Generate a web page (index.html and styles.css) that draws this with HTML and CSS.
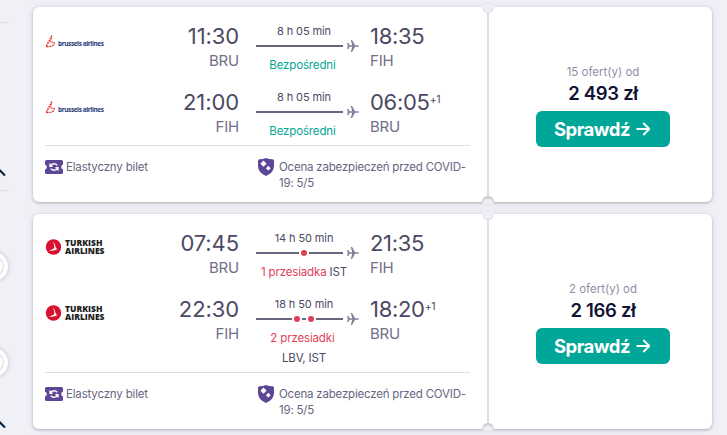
FILE: index.html
```html
<!DOCTYPE html>
<html lang="pl">
<head>
  <meta charset="UTF-8" />
  <meta name="viewport" content="width=device-width, initial-scale=1.0" />
  <title>Loty BRU - FIH</title>
  <link rel="stylesheet" href="styles.css">
</head>
<body>
  <!-- shared icons -->
  <svg class="sprite" width="0" height="0">
    <symbol id="plane" viewBox="0 0 12 12">
      <path d="M0 3h1.2l1.6 2.2h2.4L3.8 0h1.3l3 5.2h2.7q1.2.2 1.2.8t-1.2.8H8.1l-3 5.2H3.8l1.4-5.2H2.8L1.2 9H0l.8-3z" />
    </symbol>
    <symbol id="brussels" viewBox="0 0 12 16">
      <g fill="none" stroke="#e8382f">
        <path d="M6.800 1.500L1.200 12.500" stroke-width="1.400" stroke-dasharray="1.700 .8" />
        <path d="M7 2.500L5 8.500" stroke-width=".8" />
        <path d="M1 12.700Q8.500 12.700 9.300 9.800Q9.700 7.300 6.300 8.300" stroke-width="1.200" stroke-dasharray="2.200 .8" />
      </g>
    </symbol>
    <symbol id="turkish" viewBox="0 0 17 18">
      <circle cx="8.500" cy="9" r="7.700" fill="#d8102c" />
      <path d="M7.200 3.200Q10.500 8 8.800 10.600Q6.500 12.200 4 12.400Q9 13.400 12.600 11Q11 10.800 10.600 9Q10.300 5.400 7.200 3.200z" fill="#fff" />
    </symbol>
    <symbol id="ticket" viewBox="0 0 18 14">
      <path d="M1.500 0h15Q18 0 18 1.500V4.500Q16.200 5 16.200 7T18 9.500v3Q18 14 16.500 14h-15Q0 14 0 12.500v-3Q1.800 9 1.800 7T0 4.500v-3Q0 0 1.500 0z" fill="#5e4696" />
      <path d="M5 3.500v2.700h2.600M5.300 6Q6.500 3.800 9 3.800q2 0 3.300 1.600M13 10.500V7.800h-2.600M12.700 8Q11.500 10.200 9 10.200q-2 0-3.300-1.600" fill="none" stroke="#fff" stroke-width="1.400" />
    </symbol>
    <symbol id="shield" viewBox="0 0 16 18">
      <path d="M8 0Q11 1.200 14.500 1.200 16 1.200 16 2.800V8Q16 14.500 8 18 0 14.500 0 8V2.800Q0 1.200 1.500 1.200 5 1.200 8 0z" fill="#5e4696" />
      <path d="M5.500 2.600L8.600 5.700L5.500 8.800L2.400 5.700zM10.300 7.800L12.700 10.200L10.300 12.600L7.900 10.200z" fill="#fff" />
    </symbol>
    <symbol id="arrow" viewBox="0 0 14 14">
      <path d="M.5 7h12M7.300 1l6 6-6 6" fill="none" stroke="#fff" stroke-width="1.900" />
    </symbol>
  </svg>

  <aside class="filters">
    <div class="filter-head"></div>
    <div class="filter-section">
      <svg class="chevron" width="6" height="8" viewBox="0 0 6 8"><path d="M-1 .5L5 6.500" /></svg>
    </div>
    <div class="filter-section sliders">
      <span class="handle handle-first"></span>
      <span class="handle handle-second"></span>
      <svg class="chevron" width="6" height="8" viewBox="0 0 6 8"><path d="M-1 .5L5 6.500" /></svg>
    </div>
  </aside>

  <main class="results">
    <article class="card">
      <div class="itinerary">
        <div class="legs">
          <div class="leg">
            <div class="logo brussels"><svg><use href="#brussels" /></svg><span>brussels airlines</span></div>
            <div class="point from">
              <div class="time">11:30</div>
              <div class="code">BRU</div>
            </div>
            <div class="route">
              <div class="duration">8 h 05 min</div>
              <div class="track"><span class="line"></span><svg class="plane"><use href="#plane" /></svg></div>
              <div class="stops"><span class="direct">Bezpośredni</span>&nbsp;</div>
            </div>
            <div class="point">
              <div class="time">18:35</div>
              <div class="code">FIH</div>
            </div>
          </div>
          <div class="leg">
            <div class="logo brussels"><svg><use href="#brussels" /></svg><span>brussels airlines</span></div>
            <div class="point from">
              <div class="time">21:00</div>
              <div class="code">FIH</div>
            </div>
            <div class="route">
              <div class="duration">8 h 05 min</div>
              <div class="track"><span class="line"></span><svg class="plane"><use href="#plane" /></svg></div>
              <div class="stops"><span class="direct">Bezpośredni</span>&nbsp;</div>
            </div>
            <div class="point">
              <div class="time">06:05<sup>+1</sup></div>
              <div class="code">BRU</div>
            </div>
          </div>
        </div>
        <div class="perks">
          <div class="perk"><svg class="ticket"><use href="#ticket" /></svg><span>Elastyczny bilet</span></div>
          <div class="perk covid"><svg class="shield"><use href="#shield" /></svg><span>Ocena zabezpieczeń przed COVID-<br>19: 5/5</span></div>
        </div>
      </div>
      <div class="offer">
        <div class="offer-count">15 ofert(y) od</div>
        <div class="price">2 493 zł</div>
        <button type="button"><span>Sprawdź</span><svg class="arrow"><use href="#arrow" /></svg></button>
      </div>
    </article>

    <article class="card">
      <div class="itinerary">
        <div class="legs">
          <div class="leg">
            <div class="logo turkish"><svg><use href="#turkish" /></svg><span>TURKISH<br>AIRLINES</span></div>
            <div class="point from">
              <div class="time">07:45</div>
              <div class="code">BRU</div>
            </div>
            <div class="route">
              <div class="duration">14 h 50 min</div>
              <div class="track"><span class="line"></span><span class="dot"></span><span class="line"></span><svg class="plane"><use href="#plane" /></svg></div>
              <div class="stops"><span class="changes">1 przesiadka</span> IST</div>
            </div>
            <div class="point">
              <div class="time">21:35</div>
              <div class="code">FIH</div>
            </div>
          </div>
          <div class="leg">
            <div class="logo turkish"><svg><use href="#turkish" /></svg><span>TURKISH<br>AIRLINES</span></div>
            <div class="point from">
              <div class="time">22:30</div>
              <div class="code">FIH</div>
            </div>
            <div class="route">
              <div class="duration">18 h 50 min</div>
              <div class="track"><span class="line"></span><span class="dot"></span><span class="line short"></span><span class="dot"></span><span class="line"></span><svg class="plane"><use href="#plane" /></svg></div>
              <div class="stops"><span class="changes">2 przesiadki</span>&nbsp;<br>LBV, IST</div>
            </div>
            <div class="point">
              <div class="time">18:20<sup>+1</sup></div>
              <div class="code">BRU</div>
            </div>
          </div>
        </div>
        <div class="perks">
          <div class="perk"><svg class="ticket"><use href="#ticket" /></svg><span>Elastyczny bilet</span></div>
          <div class="perk covid"><svg class="shield"><use href="#shield" /></svg><span>Ocena zabezpieczeń przed COVID-<br>19: 5/5</span></div>
        </div>
      </div>
      <div class="offer">
        <div class="offer-count">2 ofert(y) od</div>
        <div class="price">2 166 zł</div>
        <button type="button"><span>Sprawdź</span><svg class="arrow"><use href="#arrow" /></svg></button>
      </div>
    </article>
  </main>
</body>
</html>
```

FILE: styles.css
```css
* {
  box-sizing: border-box;
  margin: 0;
  padding: 0;
}

body {
  display: flex;
  height: 435px;
  overflow: hidden;
  background: #f0f1f7;
  font-family: Inter, "Liberation Sans", sans-serif;
  font-size: 11.5px;
  color: #4c4963;
}

svg {
  display: block;
  flex: none;
}

.sprite {
  position: absolute;
}

/* filters column */
.filters {
  width: 9px;
  flex: none;
}

.filter-head {
  height: 23px;
  border-bottom: 1px solid #dddde5;
}

.filter-section {
  position: relative;
  display: flex;
  flex-direction: column;
  justify-content: flex-end;
  height: 168px;
  padding-bottom: 13px;
  border-bottom: 1px solid #dddde5;
}

.filter-section.sliders {
  height: 244px;
  padding-bottom: 6px;
  border-bottom: none;
}

.chevron path {
  fill: none;
  stroke: #05203c;
  stroke-width: 2;
}

.handle {
  position: absolute;
  left: -21px;
  width: 29px;
  height: 29px;
  border: 4px solid #fff;
  border-radius: 50%;
  background: #fff;
  box-shadow: 0 0 4px rgba(60, 60, 90, 0.3), inset 0 0 0 1px #d3d3dc;
}

.handle-first {
  top: 61px;
}

.handle-second {
  top: 157px;
}

/* results */
.results {
  display: flex;
  flex-direction: column;
  gap: 12px;
  width: 679px;
  margin: 7px 0 0 24px;
}

.card {
  position: relative;
  display: flex;
  flex: none;
  background: #fff;
  border-radius: 6px;
  box-shadow: 0 1px 3px rgba(37, 32, 31, 0.3), 0 0 10px rgba(60, 60, 110, 0.07);
}

/* notches on the tear line */
.card::before,
.card::after {
  content: "";
  position: absolute;
  left: 449px;
  width: 12px;
  height: 8px;
  background: #eeeff4;
}

.card::before {
  top: -2px;
  border-radius: 0 0 6px 6px;
  box-shadow: inset 0 -1px 1px #dcdce4;
}

.card::after {
  bottom: -2px;
  border-radius: 6px 6px 0 0;
  box-shadow: inset 0 2px 2px #c4c4ca;
}

.itinerary {
  width: 456px;
  padding: 15px 17px 11px 12px;
  border-right: 2px solid #dddde5;
}

.legs {
  display: flex;
  flex-direction: column;
  gap: 13px;
  padding-bottom: 4px;
  border-bottom: 1px solid #dddde5;
}

.leg {
  display: grid;
  grid-template-columns: 60px 134px 120px 1fr;
}

.logo {
  display: flex;
  align-items: flex-start;
  width: 60px;
  white-space: nowrap;
}

.brussels {
  margin-top: 12px;
  gap: 1px;
  font: bold 6.5px/16px "Open Sans", sans-serif;
  letter-spacing: -0.42px;
  color: #1f3c78;
}

.brussels svg {
  width: 12px;
  height: 16px;
}

.brussels span {
  padding-top: 2px;
}

.turkish {
  margin-top: 8px;
  gap: 3px;
  font: 800 8.5px/8px "Open Sans", sans-serif;
  color: #1d1d1b;
}

.turkish svg {
  width: 17px;
  height: 18px;
  margin-top: 1px;
}

.turkish span {
  padding-top: 2px;
}

.point {
  padding-left: 11px;
}

.point.from {
  padding: 0;
  text-align: right;
}

.time {
  height: 27px;
  line-height: 28px;
  font-size: 22px;
  letter-spacing: -0.3px;
  white-space: nowrap;
}

.from .time {
  letter-spacing: -0.1px;
}

.time sup {
  position: relative;
  top: -7px;
  font-size: 10.5px;
  line-height: 0;
  vertical-align: baseline;
}

.code {
  line-height: 24px;
  font-size: 15px;
  letter-spacing: -0.2px;
  color: #736f89;
}

.route {
  width: 103px;
  margin-left: 17px;
}

.duration,
.stops {
  width: 96px;
  text-align: center;
  white-space: nowrap;
}

.duration {
  line-height: 19px;
  height: 18px;
  font-size: 11px;
  letter-spacing: -0.1px;
}

.track {
  display: flex;
  align-items: center;
  gap: 2px;
  height: 12px;
  margin-bottom: 3px;
}

.line {
  flex: 1 0 0;
  height: 2px;
  background: #68657f;
}

.line:first-child {
  flex-basis: 9px;
}

.line.short {
  flex: none;
  width: 4px;
}

.dot {
  width: 6px;
  height: 6px;
  border-radius: 50%;
  background: #e03e56;
}

.plane {
  width: 12px;
  height: 12px;
  margin-left: 2px;
  fill: #85809a;
}

.stops {
  line-height: 20px;
  letter-spacing: -0.15px;
}

.direct {
  color: #00a698;
}

.changes {
  color: #e03e56;
}

.perks {
  display: grid;
  grid-template-columns: 213px 1fr;
  padding-top: 13px;
  line-height: 16px;
  letter-spacing: -0.17px;
  color: #68657f;
}

.perk {
  display: flex;
  align-items: flex-start;
  gap: 3px;
  white-space: nowrap;
}

.covid {
  gap: 5px;
  letter-spacing: -0.2px;
}

.ticket {
  width: 18px;
  height: 14px;
  margin-top: 1px;
}

.shield {
  width: 16px;
  height: 18px;
  margin-top: -1px;
}

.offer {
  display: flex;
  flex: 1;
  flex-direction: column;
  align-items: center;
  justify-content: center;
  padding-left: 5px;
}

.offer-count {
  line-height: 18px;
  color: #918ea3;
}

.price {
  line-height: 25px;
  margin-bottom: 5px;
  font-size: 18.5px;
  font-weight: 600;
  letter-spacing: -0.3px;
  color: #111236;
}

button {
  display: flex;
  align-items: center;
  justify-content: center;
  gap: 6px;
  width: 134px;
  height: 36px;
  padding: 1px 2px 0 0;
  border: none;
  border-radius: 6px;
  background: #00a698;
  color: #fff;
  font-family: inherit;
  font-size: 18.5px;
  font-weight: 700;
  letter-spacing: -0.5px;
  cursor: pointer;
}

.arrow {
  width: 14px;
  height: 14px;
}
```
